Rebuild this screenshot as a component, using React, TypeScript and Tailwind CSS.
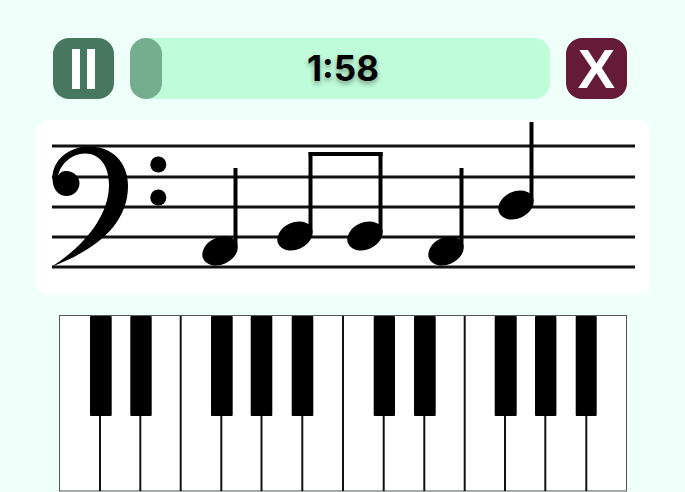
const STAFF_LINES = [146, 177, 207, 237, 267];

// head centre and stem top, page coordinates (the svg viewBox matches the page)
const NOTES = [
  { x: 220, y: 251, stemTop: 168 },
  { x: 295, y: 236, stemTop: 152 },
  { x: 365, y: 236, stemTop: 152 },
  { x: 446, y: 251, stemTop: 168 },
  { x: 516, y: 205, stemTop: 122 },
];

const WHITE_DIVIDERS = [100, 140.3, 180.7, 221.3, 261.5, 302.3, 343, 383.7, 424.3, 464.7, 505, 545.3, 586.3];

const BLACK_KEYS = [
  { x: 90, w: 21.7 },
  { x: 130.3, w: 21.4 },
  { x: 211, w: 21.7 },
  { x: 250.7, w: 21.6 },
  { x: 291.7, w: 21.6 },
  { x: 373.7, w: 21.3 },
  { x: 414, w: 21.7 },
  { x: 494.7, w: 22 },
  { x: 535, w: 21.4 },
  { x: 575.7, w: 21 },
];

function Staff() {
  return (
    <svg viewBox="36 120 614 175" className="block h-[175px] w-[614px]">
      {STAFF_LINES.map(y => (
        <line key={y} x1="52" x2="635" y1={y} y2={y} stroke="#111" strokeWidth="3" />
      ))}
      {/* bass clef */}
      <path
        d="M52 266.5C96 250 128 224 128 186C128 162 112 146.5 89 146.5C69 146.5 52.5 160 52.5 178C52.5 190 59 196 66.5 196C74 196 79.5 190 79.5 183C79.5 176 73 171 66.5 171C62 171 59.5 173 58 176C60 165 71 153.5 85 153.5C100 153.5 109 166 109 185C109 216 84 246 52 266.5Z"
        fill="#000"
      />
      <circle cx="158.3" cy="164.5" r="8" />
      <circle cx="158.3" cy="197.5" r="8" />
      {NOTES.map(n => (
        <g key={n.x}>
          <line x1={n.x + 15.5} x2={n.x + 15.5} y1={n.stemTop} y2={n.y - 4} stroke="#000" strokeWidth="4" />
          <ellipse cx={n.x} cy={n.y} rx="18.5" ry="13.5" transform={`rotate(-25 ${n.x} ${n.y})`} />
        </g>
      ))}
      <rect x="308.7" y="152" width="74" height="4" />
    </svg>
  );
}

function Piano() {
  return (
    <svg viewBox="59 315 568 177" className="block h-[177px] w-[568px]">
      <rect x="59.5" y="315.5" width="567" height="175.5" fill="#fff" stroke="#555" strokeWidth="1" />
      {WHITE_DIVIDERS.map(x => (
        <line key={x} x1={x} x2={x} y1="316" y2="491" stroke="#111" strokeWidth="2" />
      ))}
      {BLACK_KEYS.map(k => (
        <rect key={k.x} x={k.x} y="316" width={k.w} height="100" rx="1" fill="#000" />
      ))}
    </svg>
  );
}

export default function App() {
  return (
    <div className="flex h-[492px] w-[685px] flex-col overflow-hidden bg-[#effffa] pt-[38px]">
      <div className="ml-[53px] flex h-[61px] items-stretch gap-4">
        <button className="flex w-[61px] items-center justify-center gap-[7px] rounded-2xl bg-[#47785f]">
          <span className="h-10 w-2 bg-white" />
          <span className="h-10 w-2 bg-white" />
        </button>
        <div className="relative flex w-[420px] items-center justify-center rounded-2xl bg-[#bffcd9] pl-[6px]">
          <div className="absolute inset-y-0 left-0 w-8 rounded-2xl bg-[#75ad8f]" />
          <span className="font-['Inter',sans-serif] text-[35px] font-bold text-black [text-shadow:0_3px_5px_rgba(0,0,0,0.35)]">
            1:58
          </span>
        </div>
        <button className="flex w-[61px] items-center justify-center rounded-2xl bg-[#651a37] font-['Liberation_Sans',sans-serif] text-[56px] leading-none font-bold text-white">
          X
        </button>
      </div>
      <div className="mt-[21px] ml-9 w-[614px] rounded-xl bg-[#fefffe]">
        <Staff />
      </div>
      <div className="mt-5 ml-[59px]">
        <Piano />
      </div>
    </div>
  );
}
